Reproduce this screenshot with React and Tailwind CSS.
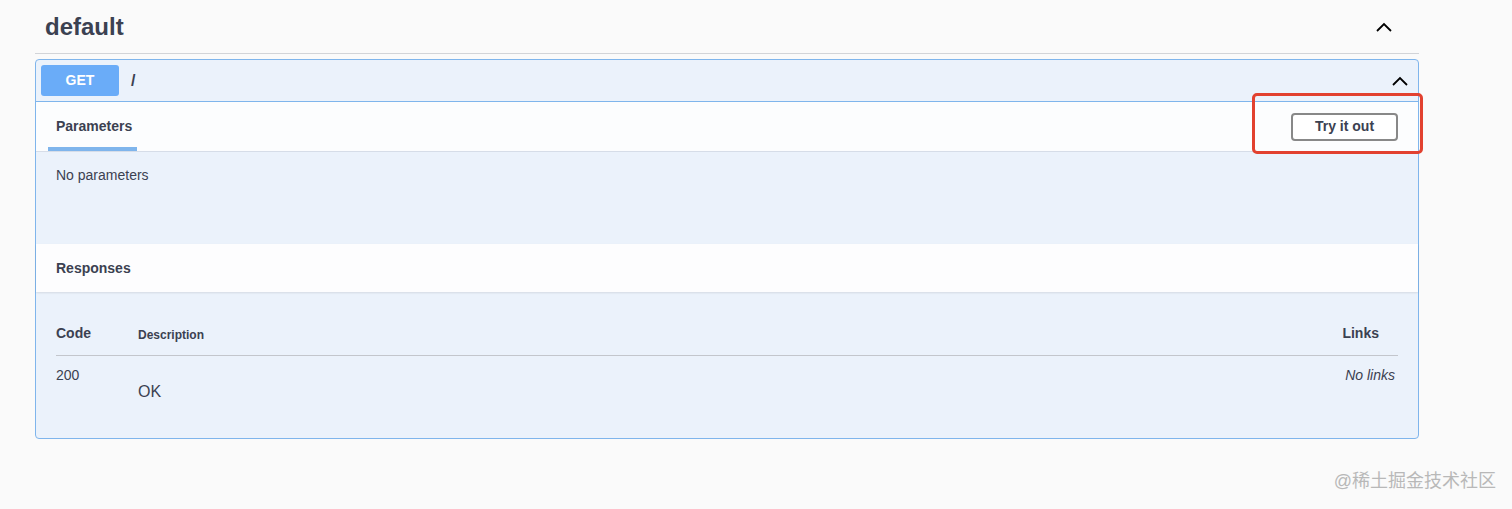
import { useState } from 'react';

const Chevron = ({ className }) => (
	<svg className={className} width="20" height="20" viewBox="0 0 20 20" fill="none">
		<path d="M3 14 L10 7 L17 14" stroke="#000" strokeWidth="1.8" />
	</svg>
);

export default function App() {
	const [open] = useState(true);

	return (
		<div className="relative h-[509px] w-full overflow-hidden bg-[#fafafa] font-['Liberation_Sans','Noto_Sans_CJK_SC',sans-serif] text-[#3b4151]">
			<div className="ml-[35px] w-[1384px]">
				{/* tag header */}
				<div className="flex h-[54px] items-center justify-between border-b border-[#d2d4d8] pl-[10px] pr-[25px]">
					<h3 className="text-[24px] font-bold leading-none">default</h3>
					<Chevron />
				</div>

				{/* operation block */}
				<div className="relative mt-[5px] rounded-[4px] border border-[#7fb5ec] bg-[#ebf2fb]">
					<div className="flex h-[42px] items-center border-b border-[#7fb5ec] px-[5px]">
						<span className="flex h-[31px] w-[78px] items-center justify-center rounded-[3px] bg-[#6aacf8] text-[14px] font-bold text-white">
							GET
						</span>
						<span className="ml-[12px] text-[16px] font-bold">/</span>
						<Chevron className="ml-auto mr-[3px]" />
					</div>

					{open && (
						<>
							<div className="flex h-[50px] items-center justify-between border-b border-[#d6dde8] bg-[#fcfdfe] px-[12px] pr-[20px]">
								<div className="flex h-full flex-col justify-end">
									<span className="px-[8px] text-[14px] font-bold leading-none text-[#3b4151]">Parameters</span>
									<div className="mt-[14px] h-[4px] w-[89px] bg-[#7fb5ec]" />
								</div>
								<button className="h-[28px] w-[107px] rounded-[4px] border-2 border-[#888] bg-white text-[14px] font-bold text-[#3b4151]">
									Try it out
								</button>
							</div>
							<div className="h-[92px] px-[20px] pt-[13px] text-[14px]">No parameters</div>

							<div className="flex h-[48px] items-center bg-[#fdfdfe] px-[20px] text-[14px] font-bold shadow-[0_1px_2px_rgba(0,0,0,0.1)]">
								Responses
							</div>

							<div className="px-[20px] pb-[34px] pt-[31px]">
								<div className="flex items-end border-b border-[#c3c6cc] pb-[11px]">
									<span className="w-[82px] text-[14px] font-bold">Code</span>
									<span className="text-[12px] font-bold">Description</span>
									<span className="ml-auto mr-[19px] text-[14px] font-bold">Links</span>
								</div>
								<div className="flex pt-[9px]">
									<span className="w-[82px] text-[14px]">200</span>
									<span className="pt-[15px] text-[16px]">OK</span>
									<span className="ml-auto mr-[3px] text-[14px] italic">No links</span>
								</div>
							</div>
						</>
					)}

					{/* highlight annotation */}
					<div className="absolute left-[1216px] top-[33px] h-[61px] w-[171px] rounded-[5px] border-[3px] border-[#e2412f]" />
				</div>
			</div>

			<div className="absolute bottom-[14px] right-[16px] text-[18px] text-[#b8b8b8]">@稀土掘金技术社区</div>
		</div>
	);
}
